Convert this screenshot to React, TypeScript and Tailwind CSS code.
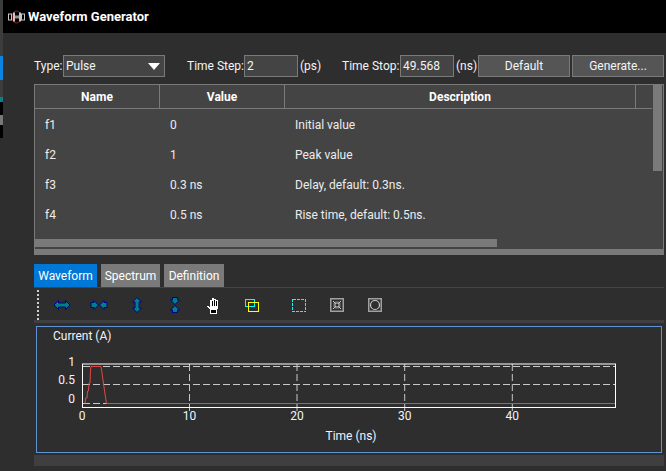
import type { ReactNode } from "react";

const rows = [
  { name: "f1", value: "0", desc: "Initial value" },
  { name: "f2", value: "1", desc: "Peak value" },
  { name: "f3", value: "0.3 ns", desc: "Delay, default: 0.3ns." },
  { name: "f4", value: "0.5 ns", desc: "Rise time, default: 0.5ns." },
];

const tickX = [
  { x: 189.5, label: "10" },
  { x: 297, label: "20" },
  { x: 404.7, label: "30" },
  { x: 512.3, label: "40" },
];

function SpoolIcon() {
  return (
    <svg width="17" height="14" viewBox="0 0 17 14" className="shrink-0">
      <ellipse cx="8.5" cy="7" rx="4.5" ry="6" fill="none" stroke="#a02020" strokeWidth="1" />
      <rect x="0.5" y="4" width="3" height="6" fill="#000" stroke="#c8c8c8" />
      <rect x="5" y="2.5" width="2" height="9" fill="#c8c8c8" />
      <rect x="7" y="5.5" width="4" height="3" fill="#909090" />
      <rect x="11" y="2.5" width="2" height="9" fill="#c8c8c8" />
      <rect x="13.5" y="4" width="3" height="6" fill="#000" stroke="#c8c8c8" />
    </svg>
  );
}

// 18x16 box shared by the four zoom arrows
function ArrowIcon({ children }: { children: ReactNode }) {
  return (
    <svg width="18" height="16" viewBox="0 0 18 16" fill="#008080" stroke="#000090" strokeWidth="1">
      {children}
    </svg>
  );
}

function HandIcon() {
  return (
    <svg width="14" height="17" viewBox="0 0 14 17" shapeRendering="crispEdges">
      <path
        d="M1 9H3V10H4V3H6V1H8V2H10V3H12V12H11V13H4V12H3V11H2V10H1Z"
        fill="#fff"
      />
      <path d="M6 4V9M8 3V9M10 4V9" fill="none" stroke="#000" />
      <rect x="4.500" y="12.500" width="6" height="4" fill="#000" stroke="#fff" />
    </svg>
  );
}

function OverlapIcon() {
  return (
    <svg width="14" height="13" viewBox="0 0 14 13" shapeRendering="crispEdges">
      <rect x="0.5" y="0.5" width="9" height="7" fill="none" stroke="#00ffff" />
      <rect x="3.500" y="3.500" width="10" height="9" fill="none" stroke="#ffff00" />
    </svg>
  );
}

function MarqueeIcon() {
  return (
    <svg width="14" height="13" viewBox="0 0 14 13" shapeRendering="crispEdges">
      <rect x="0.5" y="0.5" width="13" height="12" fill="none" stroke="#00ffff" strokeDasharray="3 1" />
    </svg>
  );
}

function ShrinkIcon() {
  return (
    <svg width="14" height="14" viewBox="0 0 14 14">
      <rect x="0.75" y="0.75" width="12.5" height="12.5" fill="none" stroke="#a0a0a0" strokeWidth="1.5" />
      <path
        d="M3 3l2.500 2.500M11 3L8.500 5.500M3 11l2.500-2.500M11 11L8.500 8.500M6 3.500V6H3.500M8 3.500V6h2.500M6 10.500V8H3.500M8 10.500V8h2.500"
        fill="none"
        stroke="#d0d0d0"
      />
    </svg>
  );
}

function FitIcon() {
  return (
    <svg width="14" height="14" viewBox="0 0 14 14">
      <rect x="0.75" y="0.75" width="12.500" height="12.500" fill="none" stroke="#a0a0a0" strokeWidth="1.5" />
      <circle cx="7" cy="7" r="4.500" fill="none" stroke="#c8c8c8" strokeWidth="1.2" />
    </svg>
  );
}

function Chart() {
  return (
    <svg width="624" height="125" viewBox="37 327 624 125" fontSize="12" fill="#f0f4ff">
      <text x="53" y="340">Current (A)</text>
      <g stroke="#c8c8c8" strokeDasharray="7 3" fill="none">
        <line x1="83" y1="366.500" x2="615" y2="366.500" />
        <line x1="83" y1="384.500" x2="615" y2="384.500" />
        <line x1="83" y1="403.500" x2="615" y2="403.500" />
        {tickX.map((t) => (
          <line key={t.label} x1={t.x} y1="364" x2={t.x} y2="411" />
        ))}
      </g>
      <rect x="82.500" y="364" width="533" height="43.500" fill="none" stroke="#fff" />
      <polyline
        points="85,403.500 85.500,398 87,398 87.500,391 88.500,391 89,383 90,383 90.500,370 91,366.500 101,366.500 102,373 103,380 104,387 105,394 106.500,403.500 615,403.500"
        fill="none"
        stroke="#e04848"
      />
      <text x="75" y="366" textAnchor="end">1</text>
      <text x="75" y="384" textAnchor="end">0.5</text>
      <text x="75" y="403" textAnchor="end">0</text>
      <text x="82" y="420" textAnchor="middle">0</text>
      {tickX.map((t) => (
        <text key={t.label} x={t.x} y="420" textAnchor="middle">
          {t.label}
        </text>
      ))}
      <text x="351" y="440" textAnchor="middle">Time (ns)</text>
    </svg>
  );
}

export default function App() {
  return (
    <div className="flex h-[471px] w-[666px] overflow-hidden whitespace-nowrap bg-[#2e2e2e] font-['Roboto','Liberation_Sans',sans-serif] text-[12px] text-[#f4f4f4]">
      {/* bits of the window behind */}
      <div className="flex w-[3px] shrink-0 flex-col bg-[#3c3c3c]">
        <div className="h-[56px] shrink-0" />
        <div className="h-[24px] shrink-0 bg-[#0a84e0]" />
        <div className="h-[17px] shrink-0" />
        <div className="h-[5px] shrink-0 bg-[#0b7f8a]" />
        <div className="h-[13px] shrink-0 bg-black" />
        <div className="h-[10px] shrink-0 bg-[#777]" />
        <div className="h-[13px] shrink-0 bg-black" />
        <div className="flex-1 bg-[#2e2e2e]" />
      </div>

      <div className="flex min-w-0 flex-1 flex-col">
        <div className="flex h-[33px] shrink-0 items-center gap-[2px] bg-black pl-[5px] text-[13px] font-bold text-white">
          <SpoolIcon />
          <span className="ml-[1px]">Waveform Generator</span>
        </div>

        <div className="flex flex-1 flex-col bg-[#2e2e2e] pl-[31px] pr-[2px] pt-[22px]">
          <div className="flex h-[22px] shrink-0 items-center">
            <span className="w-[29px]">Type:</span>
            <div className="flex h-[22px] w-[102px] items-center justify-between border border-[#7a7a7a] bg-[#444] pl-[2px] pr-[4px]">
              <span>Pulse</span>
              <span className="h-0 w-0 border-x-[6px] border-t-[7px] border-x-transparent border-t-white" />
            </div>
            <span className="ml-[22px] w-[57px]">Time Step:</span>
            <div className="flex h-[22px] w-[54px] items-center border border-[#7a7a7a] bg-[#444] pl-[2px]">2</div>
            <span className="ml-[2px] w-[42px]">(ps)</span>
            <span className="w-[58px]">Time Stop:</span>
            <div className="flex h-[22px] w-[54px] items-center border border-[#7a7a7a] bg-[#444] pl-[2px]">49.568</div>
            <span className="ml-[2px] w-[22px]">(ns)</span>
            <button className="h-[22px] w-[92px] border border-[#7a7a7a] bg-[#555] text-center">Default</button>
            <button className="ml-[2px] h-[22px] w-[92px] border border-[#7a7a7a] bg-[#555] text-center">Generate...</button>
          </div>

          <div className="mt-[7px] flex h-[171px] w-[630px] shrink-0 border-x border-t border-b-[6px] border-[#7a7a7a] bg-[#444]">
            <div className="flex min-w-0 flex-1 flex-col">
              <div className="flex h-[24px] shrink-0 border-b border-[#7a7a7a] font-bold text-white">
                <div className="flex w-[125px] items-center justify-center border-r border-[#7a7a7a]">Name</div>
                <div className="flex w-[125px] items-center justify-center border-r border-[#7a7a7a]">Value</div>
                <div className="flex w-[351px] items-center justify-center border-r border-[#7a7a7a]">Description</div>
              </div>
              {rows.map((r) => (
                <div key={r.name} className="flex h-[30px] shrink-0 items-center pt-[2px] text-[#ececec]">
                  <div className="w-[125px] pl-[10px]">{r.name}</div>
                  <div className="w-[125px] pl-[10px]">{r.value}</div>
                  <div className="pl-[10px]">{r.desc}</div>
                </div>
              ))}
              <div className="mt-auto mb-[2px] h-[8px] w-[462px] shrink-0 bg-[#7a7a7a]" />
            </div>
            <div className="ml-[1px] w-[10px] shrink-0">
              <div className="h-[86px] w-[9px] bg-[#7a7a7a]" />
            </div>
          </div>

          <div className="mt-[9px] flex h-[23px] shrink-0 gap-[4px] text-white">
            <div className="flex w-[63px] items-center justify-center bg-[#0078d7]">Waveform</div>
            <div className="flex w-[59px] items-center justify-center bg-[#7a7a7a]">Spectrum</div>
            <div className="flex w-[60px] items-center justify-center bg-[#7a7a7a]">Definition</div>
          </div>

          <div className="flex h-[33px] w-[630px] shrink-0 items-center border-t border-[#444] pl-[3px]">
            <div className="h-[30px] w-[2px] self-end border-l-2 border-dotted border-[#d0d0d0]" />
            <div className="ml-[4px] flex items-center pt-[2px]">
              <div className="flex w-[37px] justify-center">
                <ArrowIcon>
                  <polygon points="1,8 5.500,3.500 5.500,6 12.500,6 12.500,3.500 17,8 12.500,12.500 12.500,10 5.500,10 5.500,12.500" />
                </ArrowIcon>
              </div>
              <div className="flex w-[38px] justify-center">
                <ArrowIcon>
                  <polygon points="1,5.500 4,5.500 4,3.500 8.500,8 4,12.500 4,10.500 1,10.500" />
                  <polygon points="17,5.500 14,5.500 14,3.500 9.500,8 14,12.500 14,10.500 17,10.500" />
                </ArrowIcon>
              </div>
              <div className="flex w-[38px] justify-center">
                <ArrowIcon>
                  <polygon points="9,0.500 13.500,5 11,5 11,11 13.500,11 9,15.500 4.500,11 7,11 7,5 4.500,5" />
                </ArrowIcon>
              </div>
              <div className="flex w-[38px] justify-center">
                <ArrowIcon>
                  <polygon points="6.500,0.500 11.500,0.500 11.500,3 13.500,3 9,7.500 4.500,3 6.500,3" />
                  <polygon points="6.500,15.500 11.500,15.500 11.500,13 13.500,13 9,8.500 4.500,13 6.500,13" />
                </ArrowIcon>
              </div>
              <div className="flex w-[38px] justify-center">
                <HandIcon />
              </div>
              <div className="flex w-[39px] justify-center">
                <OverlapIcon />
              </div>
              <div className="ml-[9px] flex w-[38px] justify-center">
                <MarqueeIcon />
              </div>
              <div className="flex w-[38px] justify-center">
                <ShrinkIcon />
              </div>
              <div className="flex w-[38px] justify-center">
                <FitIcon />
              </div>
            </div>
          </div>

          <div className="h-[3px] w-[630px] shrink-0 bg-[#3f3f3f]" />
          <div className="ml-[2px] mt-[3px] h-[127px] w-[626px] shrink-0 border border-[#5f93d3]">
            <Chart />
          </div>
          <div className="mt-[2px] h-[11px] w-[630px] shrink-0 bg-[#3f3f3f]" />
        </div>
      </div>
    </div>
  );
}
